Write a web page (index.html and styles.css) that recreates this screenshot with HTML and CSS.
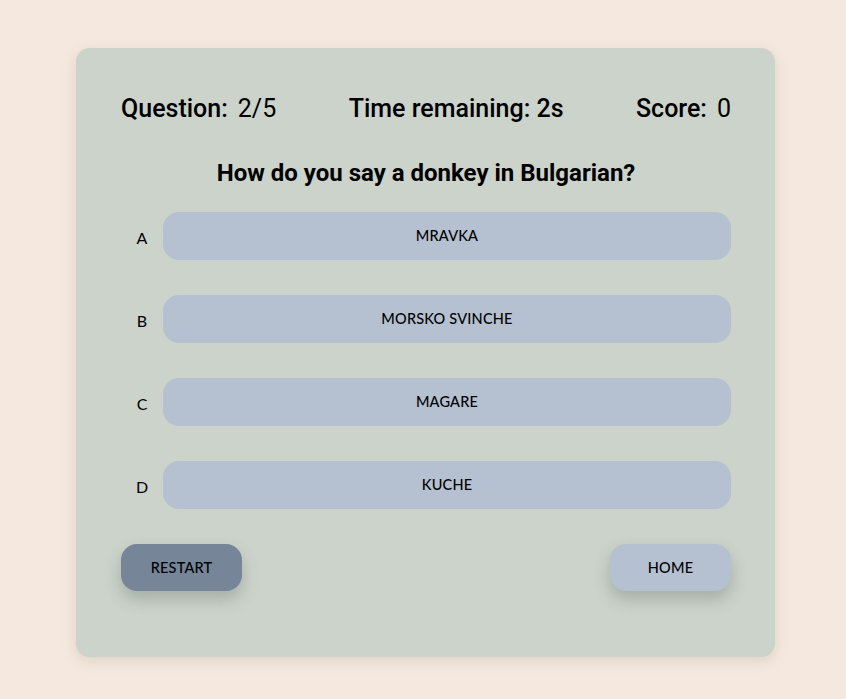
FILE: index.html
```html
<!DOCTYPE html>
<html lang="en">
<head>
<meta charset="utf-8">
<title>Quiz</title>
<link rel="stylesheet" href="styles.css">
</head>
<body>
<main class="card">
  <div class="stats">
    <div class="stat"><span class="label">Question:</span><span class="value">2/5</span></div>
    <div class="stat"><span class="label">Time remaining: 2s</span></div>
    <div class="stat"><span class="label">Score:</span><span class="value">0</span></div>
  </div>
  <h1 class="question">How do you say a donkey in Bulgarian?</h1>
  <div class="options">
    <div class="option"><span class="letter">A</span><button class="answer">MRAVKA</button></div>
    <div class="option"><span class="letter">B</span><button class="answer">MORSKO SVINCHE</button></div>
    <div class="option"><span class="letter">C</span><button class="answer">MAGARE</button></div>
    <div class="option"><span class="letter">D</span><button class="answer">KUCHE</button></div>
  </div>
  <div class="actions">
    <button class="action restart">RESTART</button>
    <button class="action home">HOME</button>
  </div>
</main>
</body>
</html>
```
FILE: styles.css
```css
html, body {
  margin: 0;
  padding: 0;
  background: #f5e9df;
  height: 100%;
}
body {
  padding-top: 48px;
  padding-left: 76px;
  box-sizing: border-box;
}
.card {
  width: 699px;
  height: 609px;
  box-sizing: border-box;
  background: #cbd3ca;
  border-radius: 14px;
  padding: 47px 44px 0 45px;
  box-shadow: 0 4px 14px rgba(120, 100, 80, 0.18);
  font-family: Roboto, "Liberation Sans", sans-serif;
  color: #000;
}
.stats {
  display: flex;
  justify-content: space-between;
  font-size: 25px;
  line-height: 28px;
}
.stat { display: flex; gap: 10px; }
.label { font-weight: 500; }
.value { font-weight: 400; }
.question {
  margin: 36px 0 0;
  text-align: center;
  font-size: 24px;
  line-height: 29px;
  font-weight: 700;
}
.options {
  margin-top: 24px;
  display: flex;
  flex-direction: column;
  gap: 35px;
}
.option {
  display: flex;
  align-items: center;
}
.letter {
  width: 42px;
  text-align: center;
  font-family: Lato, "Open Sans", sans-serif;
  font-size: 16px;
  padding-top: 2px;
}
.answer {
  flex: 1;
  height: 48px;
  border: none;
  border-radius: 16px;
  background: #b5c0d0;
  font-family: Lato, "Open Sans", sans-serif;
  font-size: 14.5px;
  font-weight: 500;
  color: #000;
  letter-spacing: 0.2px;
  padding-bottom: 2px;
  cursor: pointer;
}
.actions {
  margin-top: 35px;
  display: flex;
  justify-content: space-between;
}
.action {
  width: 121px;
  height: 47px;
  border: none;
  border-radius: 16px;
  font-family: Lato, "Open Sans", sans-serif;
  font-size: 14.5px;
  font-weight: 500;
  color: #000;
  letter-spacing: 0.2px;
  box-shadow: 0 8px 16px rgba(80, 90, 80, 0.3);
}
.restart { background: #778599; }
.home { background: #b5c0d0; }
```
